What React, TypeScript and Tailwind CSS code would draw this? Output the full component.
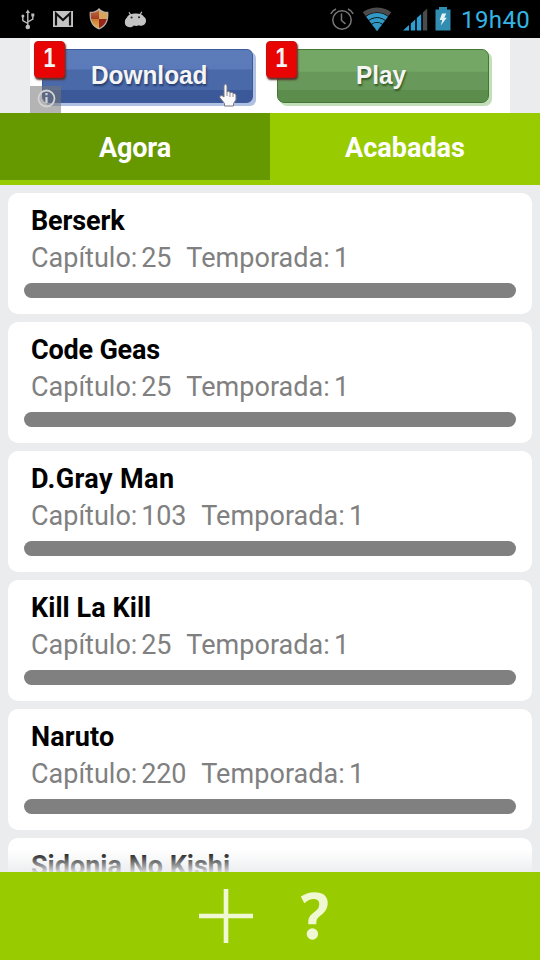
import React from "react";

type Series = { title: string; chapter?: string; season?: string; titleSpacing: string };

const series: Series[] = [
  { title: "Berserk", chapter: "25", season: "1", titleSpacing: "tracking-[-0.15px]" },
  { title: "Code Geas", chapter: "25", season: "1", titleSpacing: "tracking-[-0.2px]" },
  { title: "D.Gray Man", chapter: "103", season: "1", titleSpacing: "tracking-[0.4px]" },
  { title: "Kill La Kill", chapter: "25", season: "1", titleSpacing: "tracking-[0.05px]" },
  { title: "Naruto", chapter: "220", season: "1", titleSpacing: "tracking-[0.15px]" },
  { title: "Sidonia No Kishi", titleSpacing: "tracking-[0px]" },
];

function UsbIcon() {
  return (
    <svg width="14" height="21" viewBox="0 0 14 21" fill="none" stroke="#bdbdbd" strokeWidth="1.4">
      <path d="M6.8 18V3M6.8 14.5L1.8 11.5V7.5M6.8 13L11.8 10V7" />
      <path d="M6.8 0.5L9 4H4.6z" fill="#bdbdbd" stroke="none" />
      <circle cx="6.8" cy="18" r="2.3" fill="#bdbdbd" stroke="none" />
      <circle cx="1.9" cy="7" r="1.5" fill="#bdbdbd" stroke="none" />
      <path d="M10.3 4.5h3v3h-3z" fill="#bdbdbd" stroke="none" />
    </svg>
  );
}

function MailIcon() {
  return (
    <svg width="20" height="16" viewBox="0 0 20 16">
      <path d="M0 0H20V16H0z" fill="#c4c4c4" />
      <path d="M3 14.500V2.500L10 9L17 2.500V14.500" fill="none" stroke="#111" strokeWidth="2.200" />
    </svg>
  );
}

function ShieldIcon() {
  return (
    <svg width="20" height="22" viewBox="0 0 20 22">
      <defs>
        <clipPath id="shieldShape">
          <path d="M10 2.2C7.5 4 4.5 4.8 1.8 4.8C1.3 12 3.5 17.5 10 20C16.5 17.5 18.7 12 18.2 4.8C15.5 4.8 12.5 4 10 2.2z" />
        </clipPath>
        <linearGradient id="shieldRed" x1="0" y1="0" x2="0" y2="1">
          <stop offset="0" stopColor="#c57a48" />
          <stop offset="1" stopColor="#a23a22" />
        </linearGradient>
        <linearGradient id="shieldGold" x1="0" y1="0" x2="0" y2="1">
          <stop offset="0" stopColor="#c9792f" />
          <stop offset="1" stopColor="#ecba55" />
        </linearGradient>
      </defs>
      <path d="M10 0L12 2C14.5 3.6 17 4 19.3 3.8C20 12.5 17.5 18.7 10 21.5C2.5 18.7 0 12.5 0.7 3.8C3 4 5.500 3.600 8 2z" fill="#b9b5ad" />
      <g clipPath="url(#shieldShape)">
        <path d="M0 0H10V11H0z" fill="url(#shieldRed)" />
        <path d="M10 0H20V11H10z" fill="#d9a45c" />
        <path d="M0 11H10V22H0z" fill="url(#shieldGold)" />
        <path d="M10 11H20V22H10z" fill="#97251c" />
      </g>
    </svg>
  );
}

function DroidIcon() {
  return (
    <svg width="23" height="17" viewBox="0 0 23 17">
      <path d="M5 1.200L7 4.500M17.800 0.800L16 4" stroke="#c4c4c4" strokeWidth="1.200" />
      <path d="M3 6.500C4.500 3.500 8 2.600 11.500 2.600S18.500 3.200 20 6C22 7 22.600 9.500 21.500 12C20 15 17 15.200 14.800 14.200C12.800 15.200 11.500 15 9.800 14.500C8 17.200 2.500 16.800 1.200 13.500C0.400 10.800 1 8 3 6.500z" fill="#c4c4c4" />
      <circle cx="7.600" cy="6.500" r="1" fill="#222" />
      <circle cx="15" cy="6.200" r="1" fill="#222" />
    </svg>
  );
}

function AlarmIcon() {
  return (
    <svg width="24" height="23" viewBox="0 0 24 23" fill="none" stroke="#777" strokeWidth="1.500">
      <circle cx="12" cy="12" r="9.200" />
      <path d="M11.500 5.500V12.500L15.500 15.800M0.800 5.800Q2.500 2.500 6 1M23.200 5.800Q21.500 2.500 18 1" />
    </svg>
  );
}

function WifiIcon() {
  return (
    <svg width="30" height="24" viewBox="0 0 30 24">
      <defs>
        <clipPath id="wifiFan">
          <path d="M15 24L-1 3V-2H31V3z" />
        </clipPath>
      </defs>
      <g clipPath="url(#wifiFan)">
        <circle cx="15" cy="24" r="23.500" fill="#4b4b4b" />
        <circle cx="15" cy="24" r="18.600" fill="#000" />
        <circle cx="15" cy="24" r="18" fill="#3299c4" />
        <circle cx="15" cy="24" r="13.700" fill="#000" />
        <circle cx="15" cy="24" r="12.900" fill="#3299c4" />
        <circle cx="15" cy="24" r="9.100" fill="#000" />
        <circle cx="15" cy="24" r="8.300" fill="#3299c4" />
      </g>
    </svg>
  );
}

function SignalIcon() {
  return (
    <svg width="25" height="23" viewBox="0 0 25 23">
      <path d="M0 22.500L6 17V22.500zM7.800 15.500L12.200 11.500V22.500H7.800zM13.800 10L18.200 6V22.500H13.800z" fill="#2f9fd3" />
      <path d="M19.800 4.600L24.200 0.600V22.500H19.800z" fill="#4b4b4b" />
    </svg>
  );
}

function BatteryIcon() {
  return (
    <svg width="16" height="24" viewBox="0 0 16 24">
      <path d="M4 0H12V2.500H15.500V23.500H0.500V2.500H4z" fill="#318eb2" />
      <path d="M7 6.500H11.300L9.300 10.800H11.800L5.800 18.500L7.300 13H4.700z" fill="#e7f2f6" />
    </svg>
  );
}

function StatusBar() {
  return (
    <header className="flex h-[38px] shrink-0 items-center bg-black">
      <div className="ml-[21px] w-[32px]"><UsbIcon /></div>
      <div className="w-[36px]"><MailIcon /></div>
      <div className="w-[35px] pb-px"><ShieldIcon /></div>
      <DroidIcon />
      <div className="ml-auto flex w-[210px] items-center">
        <div className="w-[32px]"><AlarmIcon /></div>
        <div className="w-[41px]"><WifiIcon /></div>
        <div className="w-[32px]"><SignalIcon /></div>
        <BatteryIcon />
        <span className="ml-[10px] mt-[2px] text-[24px] leading-none text-[#33b5e5] tracking-[0.4px]">19h40</span>
      </div>
    </header>
  );
}

function Badge({ place }: { place: string }) {
  return (
    <span className={"absolute flex h-[37px] w-[31px] items-center justify-center rounded-[4px] border border-[#c41210] bg-[#e90404] pb-[2px] font-['Liberation_Sans'] text-[27px] font-bold leading-none text-[#f4f4f4] shadow-[1px_2px_2px_#59302a] " + place}>
      <span className="scale-x-[0.8]">1</span>
    </span>
  );
}

function HandCursor() {
  return (
    <svg className="absolute bottom-[-5px] right-[15px]" width="18" height="24" viewBox="0 0 18 24">
      <path d="M5 14V2.500Q6.500 0 8 2.500V9Q10 7.500 11 9.500Q13 8.500 14 10.500Q16.500 9.500 17 12V17L14.500 20.500V23H5.500V20.500L0.800 14.500Q0.500 12 3 12.500z" fill="#fafafa" stroke="#777580" strokeWidth="1" />
      <path d="M8 9V13M11 10V14M14 11V14" stroke="#8b8991" strokeWidth="1" />
    </svg>
  );
}

function AdBanner() {
  return (
    <section className="relative mx-[30px] h-[75px] w-[480px] shrink-0 bg-white">
      <div className="flex gap-[24px] pl-[12px] pt-[10.5px]">
        <div className="relative h-[54.5px] w-[211px] rounded-[6px] border border-[#3d5a9c] bg-[linear-gradient(#5b7bb9_0%,#5c7ab9_37%,#4a69a9_38%,#4a69a9_76%,#3b5998_77%,#3b5998_100%)] shadow-[3px_3px_0_#afc0e2]">
          <Badge place="-left-[9px] -top-[9px]" />
          <span className="absolute left-[48px] top-[9.5px] origin-left scale-x-[0.92] whitespace-nowrap font-['Liberation_Sans'] text-[26.5px] font-bold leading-[32px] text-[#f5f5f5] [text-shadow:1px_2px_2px_#263d6f]">Download</span>
          <HandCursor />
        </div>
        <div className="relative h-[54.5px] w-[211.5px] rounded-[7px] border-[1.5px] border-[#437733] bg-[linear-gradient(#74a765_0%,#74a765_41%,#69995a_42%,#69995a_76%,#5c8d4d_77%,#5c8d4d_100%)] shadow-[3px_3px_0_#c2dfba]">
          <Badge place="-left-[12px] -top-[9px]" />
          <span className="absolute left-[78px] top-[9.5px] origin-left scale-x-[0.92] font-['Liberation_Sans'] text-[26.5px] font-bold leading-[32px] text-[#f5f5f5] [text-shadow:1px_2px_2px_#315b25]">Play</span>
        </div>
      </div>
      <div className="absolute bottom-0 left-0 flex h-[27px] w-[31px] items-center justify-center bg-[#777777]/55">
        <svg className="mb-[2px] ml-[2px]" width="19" height="19" viewBox="0 0 19 19" fill="none" stroke="#d3d3d3" strokeWidth="1.800">
          <circle cx="9.500" cy="9.500" r="8" />
          <path d="M9.500 8V14M9.500 4V6.200" strokeWidth="2.200" />
        </svg>
      </div>
    </section>
  );
}

function Tabs() {
  return (
    <nav className="flex h-[72px] shrink-0 bg-[#99cc00] text-[27px] font-bold text-white">
      <button className="flex h-[67px] w-1/2 items-center justify-center bg-[#669900] pt-[4px] tracking-[-0.15px]">Agora</button>
      <button className="flex h-[67px] w-1/2 items-center justify-center pt-[4px]">Acabadas</button>
    </nav>
  );
}

function SeriesCard({ item }: { item: Series }) {
  return (
    <article className="h-[121px] shrink-0 rounded-[10px] bg-white px-4 pt-[10px]">
      <h2 className={"pl-[7px] text-[27px] font-bold leading-[36px] text-black " + item.titleSpacing}>{item.title}</h2>
      {item.chapter && (
        <>
          <div className="flex whitespace-pre pl-[7px] pt-px text-[27px] leading-[36px] text-[#808080]">
            <span>Capítulo:</span>
            <span className="ml-[4px] tracking-[-0.2px]">{item.chapter}</span>
            <span className="ml-[15px] tracking-[0.05px]">Temporada:</span>
            <span className="ml-[4px]">{item.season}</span>
          </div>
          <div className="mt-[7px] h-[15px] rounded-full bg-[#808080]" />
        </>
      )}
    </article>
  );
}

function BottomBar() {
  return (
    <footer className="flex h-[88px] shrink-0 items-center bg-[#99cc00]">
      <svg className="ml-[199px]" width="54" height="54" viewBox="0 0 54 54">
        <path d="M27 0V54M0 27H54" stroke="#eff7d3" strokeWidth="4.600" />
      </svg>
      <svg className="ml-[47px]" width="29" height="52" viewBox="0 0 29 52" fill="#eff7d3">
        <path d="M0.800 6.600Q7.500 2.300 14.200 2.300Q27.700 2.300 27.700 13.500Q27.700 19 23 23.500L18.500 27.300Q16.500 29 16.300 31.500V34.300H8.300V31.500Q8.300 27 12 24L16.500 20.300Q19.300 18 19.300 14.300Q19.300 9 13.500 9Q9 9 4.300 13.300z" />
        <circle cx="12.400" cy="44" r="5.700" />
      </svg>
    </footer>
  );
}

export default function App() {
  return (
    <div className="flex h-[960px] w-[540px] flex-col overflow-hidden bg-[#ebecee] font-[Roboto,sans-serif]">
      <StatusBar />
      <AdBanner />
      <Tabs />
      <main className="relative flex min-h-0 flex-1 flex-col gap-2 overflow-hidden p-2">
        {series.map((item) => (
          <SeriesCard key={item.title} item={item} />
        ))}
        <div className="absolute inset-x-0 bottom-0 h-[22px] bg-linear-to-b from-[#ebecee]/0 to-[#ebecee]/90" />
      </main>
      <BottomBar />
    </div>
  );
}
